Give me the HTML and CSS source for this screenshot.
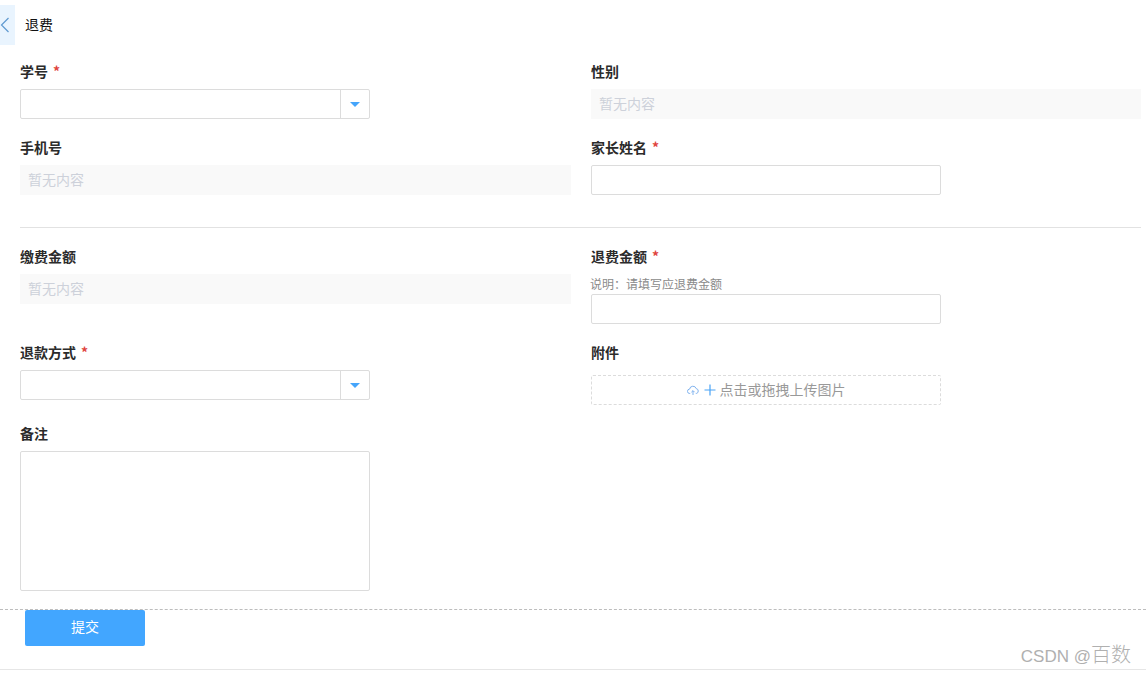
FILE: index.html
```html
<!DOCTYPE html>
<html lang="zh-CN">
<head>
<meta charset="utf-8">
<title>退费</title>
<link rel="stylesheet" href="styles.css">
</head>
<body>
<div class="page">
  <header class="header">
    <button class="back" type="button" aria-label="返回">
      <svg width="10" height="16" viewBox="0 0 10 16"><path d="M8.5 1 L1.5 8 L8.5 15" fill="none" stroke="#5f9ad0" stroke-width="1.2"/></svg>
    </button>
    <h1 class="title">退费</h1>
  </header>
  <form class="form">
    <div class="grid">
      <div class="field">
        <div class="label">学号<span class="req">*</span></div>
        <div class="select"><div class="select-value"></div><div class="select-arrow"><span class="caret"></span></div></div>
      </div>
      <div class="field">
        <div class="label">性别</div>
        <div class="empty wide">暂无内容</div>
      </div>
      <div class="field">
        <div class="label">手机号</div>
        <div class="empty">暂无内容</div>
      </div>
      <div class="field">
        <div class="label">家长姓名<span class="req">*</span></div>
        <div class="input"></div>
      </div>
    </div>
    <hr class="divider">
    <div class="grid">
      <div class="field">
        <div class="label">缴费金额</div>
        <div class="empty">暂无内容</div>
      </div>
      <div class="field">
        <div class="label">退费金额<span class="req">*</span></div>
        <div class="hint">说明：请填写应退费金额</div>
        <div class="input"></div>
      </div>
      <div class="field">
        <div class="label">退款方式<span class="req">*</span></div>
        <div class="select"><div class="select-value"></div><div class="select-arrow"><span class="caret"></span></div></div>
      </div>
      <div class="field">
        <div class="label">附件</div>
        <div class="upload">
          <svg class="cloud" width="12" height="11" viewBox="0 0 12 11"><path d="M3.2 8.5H2.8A2.2 2.2 0 0 1 2.6 4.1 3.4 3.4 0 0 1 9.2 3.6 2.5 2.5 0 0 1 9.3 8.5H8.8M6 10V5.8M4.4 7.2 6 5.6 7.6 7.2" fill="none" stroke="#7fb2ee" stroke-width="1"/></svg>
          <svg class="plus" width="12" height="12" viewBox="0 0 12 12"><path d="M6 0.5V11.5M0.5 6H11.5" fill="none" stroke="#4aa3f5" stroke-width="1.2"/></svg>
          <span class="upload-text">点击或拖拽上传图片</span>
        </div>
      </div>
      <div class="field">
        <div class="label">备注</div>
        <div class="textarea"></div>
      </div>
    </div>
  </form>
  <footer class="footer">
    <button class="submit" type="button">提交</button>
  </footer>
  <div class="watermark">CSDN @<span class="watermark-cjk">百数</span></div>
</div>
</body>
</html>
```
FILE: styles.css
```css
* { box-sizing: border-box; }
html, body { margin: 0; height: 100%; overflow: hidden; background: #fff; }
body {
  font-family: "Noto Sans CJK SC", "Liberation Sans", sans-serif;
  font-size: 14px;
  color: #222;
}
.page { position: relative; height: 673px; padding-top: 5px; }
.header { display: flex; align-items: center; height: 40px; }
.back {
  width: 15px; height: 40px; padding: 0 5px 0 0; border: 0;
  background: #e9f4fe;
  display: flex; align-items: center; justify-content: center;
}
.title { margin: 0 0 2px 10px; font-size: 14px; font-weight: 400; line-height: 20px; color: #111; }
.form { padding: 17px 5px 0 20px; }
.grid { display: grid; grid-template-columns: 551px 550px; column-gap: 20px; row-gap: 19px; align-items: start; }
.label { height: 20px; line-height: 19px; font-weight: 700; font-size: 14px; color: #2b2b2b; margin-bottom: 7px; }
.req { color: #e0443e; margin-left: 5px; font-weight: 700; }
.select { display: flex; width: 350px; height: 30px; border: 1px solid #dcdcdc; border-radius: 2px; }
.select-value { flex: 1; }
.select-arrow { width: 29px; border-left: 1px solid #dcdcdc; display: flex; align-items: center; justify-content: center; }
.caret { width: 0; height: 0; border-left: 5px solid transparent; border-right: 5px solid transparent; border-top: 5px solid #45a5fb; }
.empty { height: 30px; line-height: 28px; padding-left: 8px; background: #f9f9f9; color: #cdd1da; }
.input { width: 350px; height: 30px; border: 1px solid #dcdcdc; border-radius: 2px; }
.divider { border: 0; border-top: 1px solid #e2e2e2; margin: 32px 0 19px 0; }
.hint { height: 20px; line-height: 20px; font-size: 12px; color: #8a8a8a; margin-left: -1px; }
.upload {
  width: 350px; height: 30px; margin-top: 12px;
  border: 1px dashed #dcdcdc; border-radius: 2px;
  display: flex; align-items: center; justify-content: center;
  color: #999;
}
.upload-text { line-height: 26px; height: 28px; }
.cloud { margin-right: 5px; }
.plus { margin-right: 4px; }
.textarea { width: 350px; height: 140px; border: 1px solid #dcdcdc; border-radius: 2px; }
.footer { margin-top: 18px; border-top: 1px dashed #bdbdbd; height: 61px; padding-left: 25px; border-bottom: 1px solid #e6e6e6; }
.submit {
  display: block; width: 120px; height: 36px; padding: 0 0 5px; border: 0; border-radius: 2px;
  background: #42a6ff; color: #fff; font: inherit;
}
.watermark { position: absolute; right: 15px; top: 641px; font-size: 17px; line-height: 26px; color: #b0b0b0; font-family: "Liberation Sans", "Noto Sans CJK SC", sans-serif; }
.watermark-cjk { font-size: 20px; font-family: "Noto Sans CJK SC", sans-serif; font-weight: 300; }
```
